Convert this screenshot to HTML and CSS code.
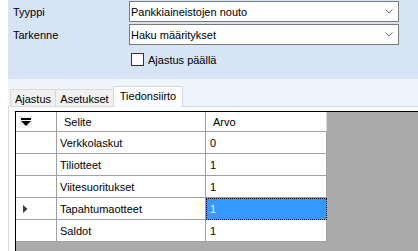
FILE: index.html
```html
<!DOCTYPE html>
<html lang="fi">
<head>
<meta charset="utf-8">
<link rel="stylesheet" href="styles.css">
</head>
<body>
<div class="app">
  <div class="top">
    <div class="form">
      <div class="lbl">Tyyppi</div>
      <div class="combo"><span>Pankkiaineistojen nouto</span><svg class="chev" width="8" height="5" viewBox="0 0 8 5"><polyline points="0.5,0.5 4,4 7.5,0.5" fill="none" stroke="#6a6a6a" stroke-width="1"/></svg></div>
      <div class="lbl">Tarkenne</div>
      <div class="combo"><span>Haku määritykset</span><svg class="chev" width="8" height="5" viewBox="0 0 8 5"><polyline points="0.5,0.5 4,4 7.5,0.5" fill="none" stroke="#6a6a6a" stroke-width="1"/></svg></div>
      <div></div>
      <div class="check"><span class="box"></span><span>Ajastus päällä</span></div>
    </div>
  </div>
  <div class="lower">
    <div class="tabs">
      <div class="tab t1">Ajastus</div>
      <div class="tab t2">Asetukset</div>
      <div class="tab sel">Tiedonsiirto</div>
    </div>
    <div class="page">
      <div class="grid">
        <div class="table">
          <div class="hc corner"><span class="filt"><svg width="10" height="8" viewBox="0 0 10 8"><rect x="0" y="0" width="10" height="2" fill="#000"/><polygon points="0,3 10,3 5,8" fill="#000"/></svg></span></div>
          <div class="hc hsel">Selite</div>
          <div class="hc harvo">Arvo</div>

          <div class="rh"></div><div class="c">Verkkolaskut</div><div class="c v">0</div>
          <div class="rh"></div><div class="c">Tiliotteet</div><div class="c v">1</div>
          <div class="rh"></div><div class="c">Viitesuoritukset</div><div class="c v">1</div>
          <div class="rh"><svg width="5" height="8" viewBox="0 0 5 8"><polygon points="0,0 4.5,4 0,8" fill="#3a3a3a"/></svg></div><div class="c">Tapahtumaotteet</div><div class="c v cur">1</div>
          <div class="rh"></div><div class="c">Saldot</div><div class="c v">1</div>
        </div>
      </div>
    </div>
  </div>
</div>
</body>
</html>
```

FILE: styles.css
```css
* { box-sizing: border-box; }
html, body { margin: 0; padding: 0; background: #ffffff; }
body {
  font-family: "Liberation Sans", Arial, sans-serif;
  font-size: 11px;
  color: #000;
  width: 418px;
  height: 251px;
  overflow: hidden;
}
.app {
  margin-left: 8px;
  height: 251px;
  display: flex;
  flex-direction: column;
}
.top {
  height: 79px;
  background: #d7e4f5;
  padding: 1px 0 0 5px;
}
.form {
  display: grid;
  grid-template-columns: 116px 270px;
  grid-template-rows: 21px 21px auto;
  row-gap: 2px;
  align-items: center;
}
.lbl { padding-top: 1px; }
.combo {
  height: 21px;
  border: 1px solid #7a7a7a;
  background: #fff;
  display: flex;
  align-items: center;
  justify-content: space-between;
  padding: 0 5px 0 1px;
}
.chev { display: block; }
.check {
  margin-top: 6px;
  padding-left: 2px;
  display: flex;
  align-items: center;
  gap: 4px;
}
.box {
  width: 13px;
  height: 13px;
  border: 1px solid #333;
  background: #fff;
}
.lower {
  flex: 1;
  background: #eef5fd;
  display: flex;
  flex-direction: column;
}
.tabs {
  height: 27px;
  padding-left: 2px;
  display: flex;
  align-items: flex-end;
}
.tab {
  height: 17px;
  border: 1px solid #d9d9d9;
  border-bottom: none;
  background: #f0f0f0;
  text-align: center;
  line-height: 16px;
  padding-top: 1px;
}
.t1 { width: 46px; }
.t2 { width: 59px; margin-left: -1px; }
.sel {
  width: 70px;
  height: 21px;
  margin-left: -1px;
  margin-bottom: -1px;
  background: #fcfdff;
  position: relative;
  z-index: 1;
  line-height: 17px;
}
.page {
  flex: 1;
  border-top: 1px solid #d9d9d9;
  border-left: 1px solid #d9d9d9;
  background: #fcfdff;
  padding: 4px 0 0 6px;
  display: flex;
}
.grid {
  flex: 1;
  border-top: 1px solid #000;
  border-left: 1px solid #000;
  background: #ababab;
}
.table {
  display: grid;
  grid-template-columns: 41px 149px 121px;
  grid-template-rows: 20px repeat(5, 22px);
}
.hc, .rh, .c {
  background: #fff;
  border-right: 1px solid #a0a0a0;
  border-bottom: 1px solid #a0a0a0;
  display: flex;
  align-items: center;
}
.hsel { padding-left: 7px; }
.harvo { padding-left: 7px; border-right-color: #d5d5d5; }
.corner { padding-left: 3px; align-items: flex-start; padding-top: 4px; }
.filt {
  width: 13px;
  height: 12px;
  background: #f0f0f0;
  display: flex;
  align-items: center;
  justify-content: center;
}
.filt svg { display: block; }
.rh { padding-left: 7px; }
.rh svg { display: block; }
.c { padding-left: 3px; }
.v { padding-left: 4px; }
.cur {
  background: #3399ff;
  color: #fff;
  outline: 1px dotted #000;
  outline-offset: -1px;
}
```
